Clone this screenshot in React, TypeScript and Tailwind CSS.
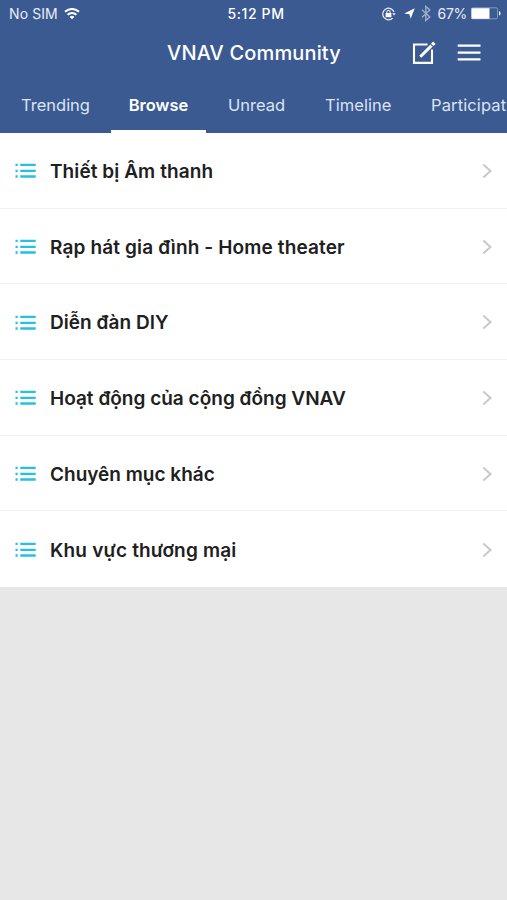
import React from "react";

const forums = [
  { title: "Thiết bị Âm thanh", tracking: "tracking-[0.08px]" },
  { title: "Rạp hát gia đình - Home theater", tracking: "tracking-[0.14px]" },
  { title: "Diễn đàn DIY", tracking: "tracking-[0.05px]" },
  { title: "Hoạt động của cộng đồng VNAV", tracking: "tracking-[0.01px]" },
  { title: "Chuyên mục khác", tracking: "tracking-[0px]" },
  { title: "Khu vực thương mại", tracking: "tracking-[0.18px]" },
];

const tabs = [
  { label: "Trending", box: "w-[69px] ml-[21px]" },
  { label: "Browse", box: "w-[95px] ml-[21px]", active: true },
  { label: "Unread", box: "w-[58px] ml-[22px]" },
  { label: "Timeline", box: "w-[66px] ml-[39px] tracking-[0.05px]" },
  { label: "Participat", box: "w-[76px] ml-[40px] tracking-[0.12px]" },
];

function Wifi() {
  return (
    <svg className="ml-[6px] h-3 w-4" viewBox="0 0 16 12" fill="none" stroke="#fff" strokeWidth="2">
      <path d="M1 3.8a10 10 0 0 1 14 0" />
      <path d="M3.6 6.7a6.3 6.3 0 0 1 8.8 0" />
      <path d="M8 11.3 5.6 9a3.4 3.4 0 0 1 4.8 0Z" fill="#fff" stroke="none" />
    </svg>
  );
}

function StatusIcons() {
  return (
    <>
      <svg className="h-[14px] w-[14px]" viewBox="0 0 14 14" fill="none" stroke="#e8edf7">
        <path d="M12 5A5.8 5.8 0 1 0 10.6 11.2" strokeWidth="1.2" />
        <path d="m10.1 6.2 1.9 2.4 1.9-2.4Z" fill="#e8edf7" stroke="none" />
        <rect x="3.6" y="6.1" width="5.8" height="4.2" rx=".4" fill="#fff" stroke="none" />
        <path d="M4.8 6.5V5.2a1.7 1.7 0 0 1 3.4 0v1.3" strokeWidth="1.1" />
      </svg>
      <svg className="ml-2 h-[11px] w-[11px]" viewBox="0 0 11 11" fill="#fff">
        <path d="M10.8.2 6.6 10.8 5.4 6.3.2 5.4Z" />
      </svg>
      <svg className="ml-[6px] h-[17px] w-[10px]" viewBox="0 0 10 17" fill="none" stroke="#9cadce" strokeWidth="1.4">
        <path d="m1 4.7 7.8 7.2-4 3.6V1.4l4 3.6L1 12.2" />
      </svg>
    </>
  );
}

function Battery() {
  return (
    <svg className="ml-[4px] h-[13px] w-[30px]" viewBox="0 0 30 13">
      <rect x=".5" y=".8" width="26" height="11" rx="1.5" fill="none" stroke="#8497c3" />
      <path d="M.5 1.2h18v10.6H.5Z" fill="#fff" />
      <path d="M28 4.3c2 .3 2 4 0 4.3Z" fill="#fff" />
    </svg>
  );
}

export default function App() {
  return (
    <div className="h-[900px] w-full overflow-hidden bg-[#e7e7e7] font-['Inter','Noto_Sans',sans-serif]">
      <header className="h-[133px] bg-[#3b5a92] text-white">
        <div className="grid h-[27px] grid-cols-[1fr_auto_1fr] items-center text-[14px] leading-[17px]">
          <div className="flex items-center pl-[9px] text-[#e8edf7]">
            <span className="tracking-[0.1px]">No SIM</span>
            <Wifi />
          </div>
          <span className="pl-[5px] font-medium tracking-[0.6px]">5:12 PM</span>
          <div className="flex items-center justify-end pr-[6px]">
            <StatusIcons />
            <span className="ml-[7px] tracking-[-0.3px] text-[#e8edf7]">67%</span>
            <Battery />
          </div>
        </div>
        <div className="grid h-[52px] grid-cols-[1fr_auto_1fr] items-center">
          <span />
          <h1 className="pl-px text-[20px] font-medium leading-6 tracking-[0.15px]">VNAV Community</h1>
          <div className="flex items-center justify-end pr-[26px]">
            <svg className="h-6 w-6" viewBox="0 0 24 24" fill="none" stroke="#fff" strokeWidth="2.1">
              <path d="M15.5 3.5H2v18.4h18V8.5" />
              <path d="m8.3 15.8 11.2-11.2" strokeWidth="3" />
              <path d="m20.2 3.9 2.2-2.2" strokeWidth="3.4" />
            </svg>
            <svg className="ml-[21px] h-6 w-6" viewBox="0 0 24 24" stroke="#fff" strokeWidth="2.3">
              <path d="M.7 4.6h22.8M.7 11.6h22.8M.7 18.4h22.8" />
            </svg>
          </div>
        </div>
        <nav className="flex h-[54px] overflow-hidden text-[16.5px] leading-5">
          {tabs.map((tab) => (
            <button
              key={tab.label}
              className={`${tab.box} h-full shrink-0 whitespace-nowrap border-b-[3px] pt-[1px] ${
                tab.active ? "border-white text-center font-semibold" : "border-transparent text-left text-[#dce4f3]"
              }`}
            >
              {tab.label}
            </button>
          ))}
        </nav>
      </header>
      <main>
        {forums.map((forum, i) => (
          <div
            key={forum.title}
            className={`flex h-[75.7px] items-center bg-white pl-[15px] pr-[14px] pt-[1px] ${
              i < forums.length - 1 ? "border-b border-[#f1f1f1]" : ""
            }`}
          >
            <svg className="h-[15px] w-[21px] shrink-0" viewBox="0 0 21 15" stroke="#25c0e2" strokeWidth="2.4">
              <path d="M.5 1.9h2.2M.5 7.9h2.2M.5 13.5h2.2M5.3 1.9h15.4M5.3 7.9h15.4M5.3 13.5h15.4" />
            </svg>
            <span className={`ml-[14px] flex-1 whitespace-nowrap pt-[2px] text-[19px] font-semibold leading-6 text-[#202020] ${forum.tracking}`}>
              {forum.title}
            </span>
            <svg className="h-4 w-3" viewBox="0 0 12 16" fill="none" stroke="#c9c9cc" strokeWidth="2">
              <path d="m2.3 1.5 7.2 6.5-7.2 6.5" />
            </svg>
          </div>
        ))}
      </main>
    </div>
  );
}
